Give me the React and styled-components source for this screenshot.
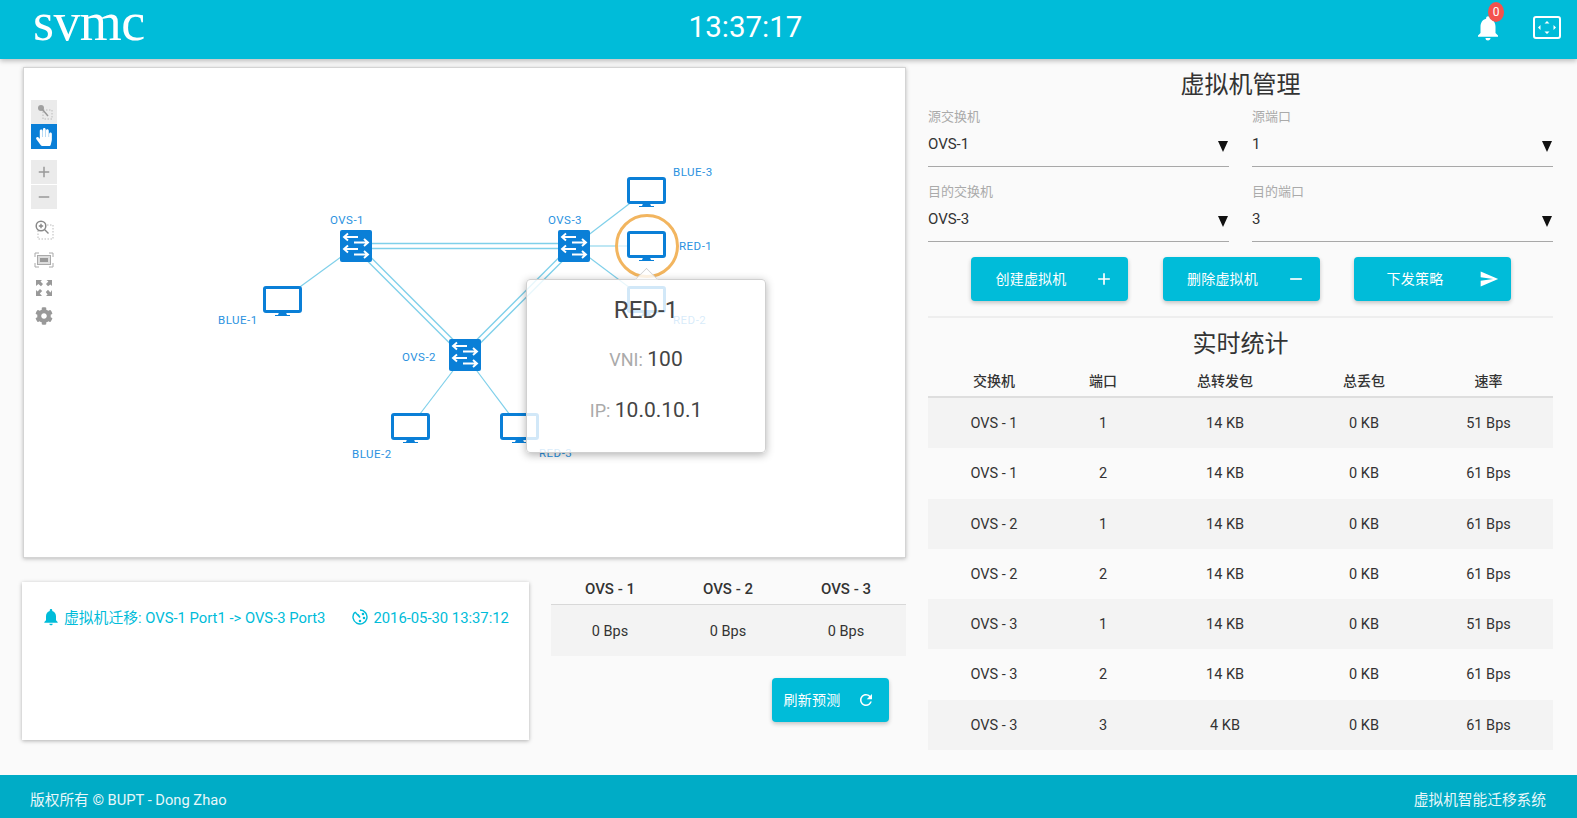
import React from "react";
import styled, { createGlobalStyle } from "styled-components";
import { MdNotifications, MdAdd, MdRemove, MdSend, MdRefresh } from "react-icons/md";
import { FaHandPaper, FaCog } from "react-icons/fa";

const CYAN = "#00bcd9";
const BLUE = "#0a7fd7";
const LINK = "#7fd0ea";

const GlobalStyle = createGlobalStyle`
  html, body {
    margin: 0;
    height: 100%;
    overflow: hidden;
    background: #fafafa;
    font-family: Roboto, "Noto Sans CJK SC", sans-serif;
    color: #333;
  }
  * { box-sizing: border-box; }
`;

const Page = styled.div`
  width: 1577px;
  height: 818px;
  display: flex;
  flex-direction: column;
`;

const TopBar = styled.header`
  height: 59px;
  flex: none;
  background: ${CYAN};
  color: #fff;
  display: grid;
  grid-template-columns: 1fr 1fr 1fr;
  align-items: center;
  padding: 0 16px 0 33px;
  box-shadow: 0 2px 5px rgba(0, 0, 0, 0.25);
  position: relative;
  z-index: 2;
`;

const Logo = styled.div`
  font-family: "Liberation Serif", serif;
  font-size: 54px;
  line-height: 43px;
  margin-top: -15px;
  letter-spacing: -0.6px;
`;

const Clock = styled.div`
  font-size: 29.5px;
  text-align: center;
  margin-top: -6px;
  margin-left: -103px;
`;

const TopIcons = styled.div`
  display: flex;
  justify-content: flex-end;
  align-items: center;
  gap: 30px;
  margin-top: -4px;
`;

const BellWrap = styled.div`
  position: relative;
  width: 30px;
  height: 30px;
  font-size: 30px;
  line-height: 0;
`;

const Badge = styled.span`
  position: absolute;
  top: -11px;
  left: 15px;
  width: 16px;
  height: 20px;
  border-radius: 50%;
  background: #f4524d;
  font-size: 12px;
  line-height: 20px;
  text-align: center;
`;

const Main = styled.main`
  flex: 1;
  display: flex;
  min-height: 0;
`;

const LeftColumn = styled.section`
  width: 928px;
  flex: none;
  padding: 8px 0 0 23px;
`;

const Canvas = styled.div`
  position: relative;
  width: 883px;
  height: 491px;
  background: #fff;
  border: 1px solid #d4d4d4;
  box-shadow: 0 1px 4px rgba(0, 0, 0, 0.25);
`;

const Graph = styled.svg`
  display: block;
  width: 100%;
  height: 100%;
`;

const NodeLabel = styled.text`
  font-family: Roboto, sans-serif;
  font-size: 11.5px;
  letter-spacing: 0.5px;
  fill: #2a92e0;
`;

const Toolbar = styled.div`
  position: absolute;
  left: 7px;
  top: 32px;
  width: 26px;
  display: flex;
  flex-direction: column;
  align-items: center;
`;

const ToolButton = styled.div`
  width: 26px;
  height: ${p => p.$h || 24}px;
  margin-top: ${p => p.$gap || 0}px;
  background: ${p => (p.$active ? BLUE : p.$plain ? "transparent" : "#ebebeb")};
  color: ${p => (p.$active ? "#fff" : "#999")};
  display: flex;
  align-items: center;
  justify-content: center;
  font-size: 18px;
`;

const BottomRow = styled.div`
  display: flex;
  margin-top: 24px;
`;

const LogCard = styled.div`
  width: 507px;
  height: 158px;
  margin-left: -1px;
  background: #fff;
  box-shadow: 0 1px 4px rgba(0, 0, 0, 0.3);
  padding: 25px 0 0 19px;
  color: ${CYAN};
  font-size: 14.8px;
`;

const LogLine = styled.div`
  display: flex;
  align-items: center;
  height: 22px;
  line-height: 22px;
  white-space: nowrap;
`;

const LogIcon = styled.span`
  display: inline-flex;
  width: ${p => p.$w}px;
  margin-left: ${p => p.$ml || 0}px;
  font-size: 20px;
  margin-top: -3px;
`;

const PredictColumn = styled.div`
  width: 355px;
  margin-left: 22px;
  margin-top: -6px;
  display: flex;
  flex-direction: column;
`;

const PredictHead = styled.div`
  display: grid;
  grid-template-columns: repeat(3, 118px);
  height: 29px;
  border-bottom: 1px solid #d8d8d8;
  font-size: 15px;
  font-weight: 500;
  text-align: center;
  line-height: 26px;
`;

const PredictRow = styled.div`
  display: grid;
  grid-template-columns: repeat(3, 118px);
  height: 51px;
  background: #f3f3f3;
  font-size: 14.5px;
  text-align: center;
  line-height: 53px;
`;

const Action = styled.button`
  height: 44px;
  width: ${p => p.$w}px;
  border: 0;
  padding: 0;
  border-radius: 4px;
  background: ${CYAN};
  color: #fff;
  font-family: inherit;
  font-size: 14px;
  display: grid;
  grid-template-columns: ${p => p.$cols};
  align-items: center;
  text-align: center;
  box-shadow: 0 2px 4px rgba(0, 0, 0, 0.22);
  letter-spacing: 0.2px;
`;

const ActionText = styled.span`
  margin-bottom: 2px;
`;

const ActionIcon = styled.span`
  display: flex;
  justify-content: center;
  font-size: ${p => p.$size || 20}px;
`;

const RefreshAction = styled(Action)`
  align-self: flex-end;
  margin: 22px 17px 0 0;
`;

const RightColumn = styled.section`
  width: 625px;
  flex: none;
`;

const Title = styled.h2`
  margin: 0;
  font-weight: 400;
  font-size: 24px;
  line-height: 36px;
  text-align: center;
  color: #333;
  padding-top: ${p => p.$top || 0}px;
`;

const FormGrid = styled.div`
  display: grid;
  grid-template-columns: 301px 301px;
  column-gap: 23px;
  row-gap: 15px;
  margin-top: 4px;
`;

const Field = styled.div`
  height: 60px;
  border-bottom: 1px solid #a8a8a8;
  position: relative;
`;

const FieldLabel = styled.div`
  font-size: 13px;
  line-height: 20px;
  color: #aaa;
`;

const FieldValue = styled.div`
  font-size: 15px;
  line-height: 20px;
  margin-top: 7px;
  color: #333;
`;

const Caret = styled.span`
  position: absolute;
  right: 1px;
  top: 34px;
  width: 0;
  height: 0;
  border-left: 5.5px solid transparent;
  border-right: 5.5px solid transparent;
  border-top: 11px solid #111;
`;

const Actions = styled.div`
  display: flex;
  gap: 34.5px;
  padding: 15px 0 15px 43px;
  border-bottom: 2px solid #eeeeee;
`;

const StatsHead = styled.div`
  display: grid;
  grid-template-columns: 132px 86px 158px 120px 129px;
  height: 35px;
  margin-top: 1px;
  border-bottom: 2px solid #dedede;
  font-size: 14px;
  font-weight: 500;
  line-height: 36px;
  text-align: center;
  color: #333;
`;

const StatsRow = styled.div`
  display: grid;
  grid-template-columns: 132px 86px 158px 120px 129px;
  height: 50.3px;
  line-height: 52px;
  font-size: 14.5px;
  text-align: center;
  background: ${p => (p.$odd ? "#f3f3f3" : "transparent")};
`;

const Footer = styled.footer`
  height: 43px;
  flex: none;
  background: #00acc6;
  color: #e8f7fa;
  display: flex;
  justify-content: space-between;
  align-items: center;
  padding: 3px 31px 0 30px;
  font-size: 14.7px;
`;

const Tooltip = styled.div`
  position: absolute;
  left: 502px;
  top: 211px;
  width: 240px;
  height: 174px;
  border-radius: 4px;
  background: rgba(255, 255, 255, 0.82);
  border: 1px solid #d0d0d0;
  box-shadow: 0 2px 8px rgba(0, 0, 0, 0.3);
  text-align: center;
  color: #444;

  &::before {
    content: "";
    position: absolute;
    left: 111px;
    top: -9px;
    width: 16px;
    height: 16px;
    transform: rotate(45deg);
    background: rgba(255, 255, 255, 0.82);
    border-left: 1px solid #d0d0d0;
    border-top: 1px solid #d0d0d0;
    clip-path: polygon(0 0, 100% 0, 0 100%);
  }
`;

const TipTitle = styled.div`
  font-size: 24px;
  line-height: 28px;
  margin-top: 16px;
`;

const TipLine = styled.div`
  font-size: 21px;
  line-height: 30px;
  margin-top: 20px;
`;

const TipKey = styled.span`
  font-size: 18px;
  color: #aaa;
`;

const Monitor = ({ x, y }) => (
  <g transform={`translate(${x} ${y})`}>
    <rect x="1.5" y="1.5" width="36" height="24" rx="1.5" fill="#fff" stroke={BLUE} strokeWidth="3" />
    <path d="M16 26.5h7l1 2.5h3v1H12v-1h3z" fill={BLUE} />
  </g>
);

const Switch = ({ x, y }) => (
  <g transform={`translate(${x} ${y})`}>
    <rect width="32" height="32" rx="2" fill={BLUE} />
    <g fill="none" stroke="#fff" strokeWidth="1.9">
      <path d="M4 7h14M8 3.500 4 7l4 3.500" />
      <path d="M14 12.500h14M24 9l4 3.500-4 3.500" />
      <path d="M4 19h14M8 15.500 4 19l4 3.500" />
      <path d="M14 24.500h14M24 21l4 3.500-4 3.500" />
    </g>
  </g>
);

// two parallel strokes for the trunk links
const DoubleLink = ({ a, b }) => {
  const dx = b[0] - a[0];
  const dy = b[1] - a[1];
  const len = Math.hypot(dx, dy);
  const ox = (-dy / len) * 2.5;
  const oy = (dx / len) * 2.5;
  return (
    <g stroke={LINK} strokeWidth="1.4">
      <line x1={a[0] + ox} y1={a[1] + oy} x2={b[0] + ox} y2={b[1] + oy} />
      <line x1={a[0] - ox} y1={a[1] - oy} x2={b[0] - ox} y2={b[1] - oy} />
    </g>
  );
};

const OVS1 = [356, 246];
const OVS2 = [465, 355];
const OVS3 = [574, 246];

const singles = [
  [OVS1, [282, 300]],
  [OVS2, [410, 427]],
  [OVS2, [519, 427]],
  [OVS3, [646, 191]],
  [OVS3, [646, 246]],
  [OVS3, [646, 300]]
];

const labels = [
  ["OVS-1", 330, 224],
  ["OVS-3", 548, 224],
  ["OVS-2", 402, 361],
  ["BLUE-1", 218, 324],
  ["BLUE-2", 352, 458],
  ["BLUE-3", 673, 176],
  ["RED-1", 679, 250],
  ["RED-2", 673, 324],
  ["RED-3", 539, 457]
];

const Topology = () => (
  <Graph viewBox="24 68 881 489">
    <DoubleLink a={OVS1} b={OVS3} />
    <DoubleLink a={OVS1} b={OVS2} />
    <DoubleLink a={OVS3} b={OVS2} />
    {singles.map(([a, b], i) => (
      <line key={i} x1={a[0]} y1={a[1]} x2={b[0]} y2={b[1]} stroke={LINK} strokeWidth="1.2" />
    ))}
    <circle cx="647" cy="246" r="30.5" fill="#fff" fillOpacity="0.6" stroke="#f2b55f" strokeWidth="3" />
    <Monitor x={263} y={286} />
    <Monitor x={391} y={413} />
    <Monitor x={500} y={413} />
    <Monitor x={627} y={177} />
    <Monitor x={627} y={231} />
    <Monitor x={627} y={286} />
    <Switch x={340} y={230} />
    <Switch x={558} y={230} />
    <Switch x={449} y={339} />
    {labels.map(([t, x, y]) => (
      <NodeLabel key={t} x={x} y={y}>
        {t}
      </NodeLabel>
    ))}
  </Graph>
);

const SelectIcon = () => (
  <svg width="18" height="18" viewBox="0 0 18 18">
    <rect x="8" y="7" width="9" height="9" fill="none" stroke="#bbb" strokeDasharray="1.5 1.5" />
    <circle cx="6" cy="5" r="3" fill="#a0a0a0" />
    <path d="M7 6l6 7" stroke="#999" strokeWidth="1.5" />
  </svg>
);

const ZoomRectIcon = () => (
  <svg width="20" height="20" viewBox="0 0 20 20" fill="none">
    <rect x="4" y="5" width="15" height="14" stroke="#bbb" strokeDasharray="1.5 1.5" />
    <circle cx="7" cy="6" r="4.8" fill="#fff" stroke="#888" strokeWidth="1.5" />
    <path d="M10.5 9.500l4 4M7 3.800v4.400M4.800 6h4.400" stroke="#888" strokeWidth="1.4" />
  </svg>
);

const FitIcon = () => (
  <svg width="20" height="16" viewBox="0 0 20 16" fill="none">
    <path d="M1 5V1h4M15 1h4v4M19 11v4h-4M5 15H1v-4" stroke="#aaa" />
    <rect x="3.5" y="3.5" width="13" height="9" fill="#ddd" stroke="#aaa" />
    <rect x="6" y="6" width="8" height="4" fill="#999" />
  </svg>
);

const ExpandIcon = () => (
  <svg width="18" height="18" viewBox="0 0 18 18" fill="#999">
    <path d="M1 1h6L5.500 2.600 8 5 6 7.200 3.400 5 1 7zM17 1v6l-1.600-1.500L13 7.200 11 5l2.400-2.400L11.500 1zM1 17v-6l1.600 1.500L5 10l2.200 2-2.400 2.600L7 17zM17 17h-6l1.600-1.600L10.800 13l2.200-2.200 2.400 2.600L17 11z" />
  </svg>
);

const FullscreenIcon = () => (
  <svg width="28" height="23" viewBox="0 0 28 23" fill="#fff">
    <rect x="1" y="1" width="26" height="21" rx="2" fill="none" stroke="#fff" strokeWidth="2" />
    <path d="M14 5l2.500 2.500h-5zM14 18l-2.500-2.500h5zM5 11.500L7.500 9v5zM23 11.500L20.500 14V9z" />
  </svg>
);

const TimerIcon = () => (
  <svg width="16" height="16" viewBox="0 0 16 16" fill="none" stroke={CYAN} strokeWidth="1.4">
    <path d="M8 1a7 7 0 1 1-5.200 2.300" />
    <path d="M3 3l5 5.500M6 5.500l2 3" />
    <circle cx="11" cy="5" r="0.6" />
    <circle cx="12" cy="9" r="0.6" />
    <circle cx="8" cy="12" r="0.6" />
  </svg>
);

const stats = [
  ["OVS - 1", "1", "14 KB", "0 KB", "51 Bps"],
  ["OVS - 1", "2", "14 KB", "0 KB", "61 Bps"],
  ["OVS - 2", "1", "14 KB", "0 KB", "61 Bps"],
  ["OVS - 2", "2", "14 KB", "0 KB", "61 Bps"],
  ["OVS - 3", "1", "14 KB", "0 KB", "51 Bps"],
  ["OVS - 3", "2", "14 KB", "0 KB", "61 Bps"],
  ["OVS - 3", "3", "4 KB", "0 KB", "61 Bps"]
];

const fields = [
  ["源交换机", "OVS-1"],
  ["源端口", "1"],
  ["目的交换机", "OVS-3"],
  ["目的端口", "3"]
];

const App = () => (
  <Page>
    <GlobalStyle />
    <TopBar>
      <Logo>svmc</Logo>
      <Clock>13:37:17</Clock>
      <TopIcons>
        <BellWrap>
          <MdNotifications />
          <Badge>0</Badge>
        </BellWrap>
        <FullscreenIcon />
      </TopIcons>
    </TopBar>
    <Main>
      <LeftColumn>
        <Canvas>
          <Topology />
          <Toolbar>
            <ToolButton>
              <SelectIcon />
            </ToolButton>
            <ToolButton $active $h={25}>
              <FaHandPaper />
            </ToolButton>
            <ToolButton $gap={11}>
              <MdAdd />
            </ToolButton>
            <ToolButton $gap={1}>
              <MdRemove />
            </ToolButton>
            <ToolButton $plain $gap={8} $h={26}>
              <ZoomRectIcon />
            </ToolButton>
            <ToolButton $plain $gap={4} $h={26}>
              <FitIcon />
            </ToolButton>
            <ToolButton $plain $gap={2} $h={26}>
              <ExpandIcon />
            </ToolButton>
            <ToolButton $plain $gap={2} $h={26}>
              <FaCog />
            </ToolButton>
          </Toolbar>
          <Tooltip>
            <TipTitle>RED-1</TipTitle>
            <TipLine>
              <TipKey>VNI: </TipKey>100
            </TipLine>
            <TipLine>
              <TipKey>IP: </TipKey>10.0.10.1
            </TipLine>
          </Tooltip>
        </Canvas>
        <BottomRow>
          <LogCard>
            <LogLine>
              <LogIcon $w={23}>
                <MdNotifications />
              </LogIcon>
              虚拟机迁移: OVS-1 Port1 -&gt; OVS-3 Port3
              <LogIcon $w={21} $ml={27}>
                <TimerIcon />
              </LogIcon>
              2016-05-30 13:37:12
            </LogLine>
          </LogCard>
          <PredictColumn>
            <PredictHead>
              <span>OVS - 1</span>
              <span>OVS - 2</span>
              <span>OVS - 3</span>
            </PredictHead>
            <PredictRow>
              <span>0 Bps</span>
              <span>0 Bps</span>
              <span>0 Bps</span>
            </PredictRow>
            <RefreshAction $w={117} $cols="80px 28px">
              <ActionText>刷新预测</ActionText>
              <ActionIcon $size={18}>
                <MdRefresh />
              </ActionIcon>
            </RefreshAction>
          </PredictColumn>
        </BottomRow>
      </LeftColumn>
      <RightColumn>
        <Title $top={8}>虚拟机管理</Title>
        <FormGrid>
          {fields.map(([label, value]) => (
            <Field key={label}>
              <FieldLabel>{label}</FieldLabel>
              <FieldValue>{value}</FieldValue>
              <Caret />
            </Field>
          ))}
        </FormGrid>
        <Actions>
          <Action $w={157} $cols="120px 26px">
            <ActionText>创建虚拟机</ActionText>
            <ActionIcon>
              <MdAdd />
            </ActionIcon>
          </Action>
          <Action $w={157} $cols="120px 26px">
            <ActionText>删除虚拟机</ActionText>
            <ActionIcon>
              <MdRemove />
            </ActionIcon>
          </Action>
          <Action $w={157} $cols="122px 26px">
            <ActionText>下发策略</ActionText>
            <ActionIcon>
              <MdSend />
            </ActionIcon>
          </Action>
        </Actions>
        <Title $top={8}>实时统计</Title>
        <StatsHead>
          <span>交换机</span>
          <span>端口</span>
          <span>总转发包</span>
          <span>总丢包</span>
          <span>速率</span>
        </StatsHead>
        {stats.map((row, i) => (
          <StatsRow key={i} $odd={i % 2 === 0}>
            {row.map((cell, j) => (
              <span key={j}>{cell}</span>
            ))}
          </StatsRow>
        ))}
      </RightColumn>
    </Main>
    <Footer>
      <span>版权所有 © BUPT - Dong Zhao</span>
      <span>虚拟机智能迁移系统</span>
    </Footer>
  </Page>
);

export default App;
